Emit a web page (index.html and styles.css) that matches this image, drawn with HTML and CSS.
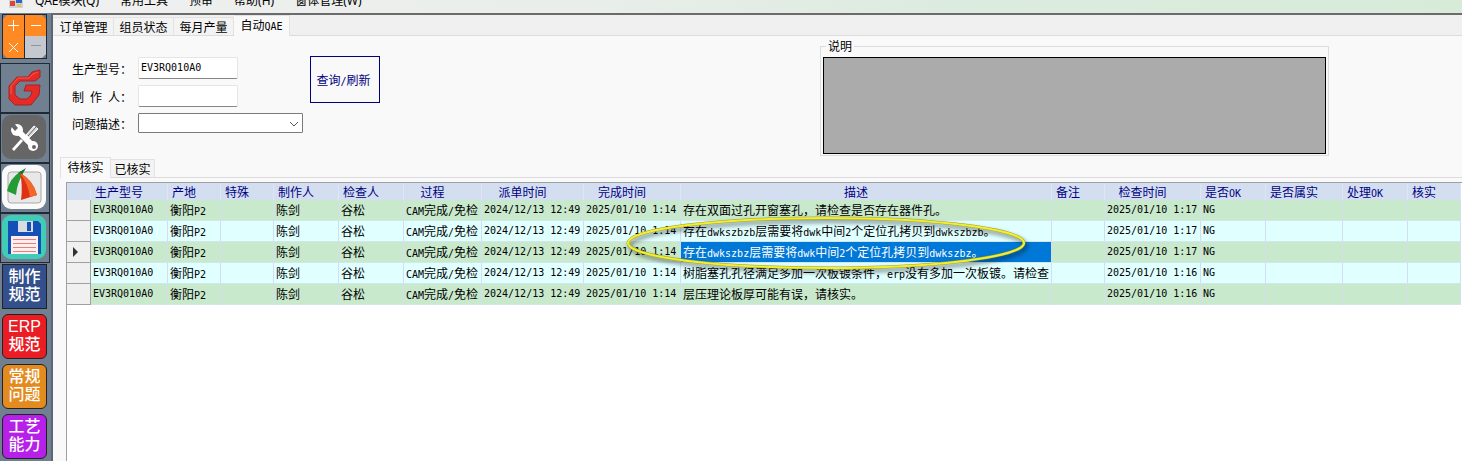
FILE: index.html
```
<!DOCTYPE html>
<html lang="zh-CN">
<head>
    <meta charset="UTF-8">
    <meta name="viewport" content="width=device-width, initial-scale=1.0">
    <title>自动QAE</title>
    <link rel="stylesheet" href="styles.css">
</head>
<body>
    <nav class="menubar">
        <svg class="app-icon" width="14" height="14" viewBox="0 0 14 14">
            <rect x="0" y="0" width="14" height="14" fill="#c9d3e0"/>
            <rect x="1" y="7" width="5" height="5" fill="#e0442c"/>
            <rect x="7" y="4" width="6" height="5" fill="#2d63c8"/>
            <rect x="8" y="10" width="4" height="3" fill="#f0c040"/>
        </svg>
        <a href="#">QAE模块(Q)</a>
        <a href="#">常用工具</a>
        <a href="#">预审</a>
        <a href="#">帮助(H)</a>
        <a href="#">窗体管理(W)</a>
    </nav>

    <div class="workspace">
        <aside class="toolbar">
            <button class="tool small" aria-label="计算器">
                <svg width="45" height="45" viewBox="0 0 45 45">
                    <rect width="45" height="45" fill="#1f2a36"/>
                    <rect x="1" y="1" width="43" height="43" fill="#708090"/>
                    <path d="M5 1H22V44H5L1 40V5Z" fill="#ff8a24"/>
                    <path d="M23 1H40L44 5V22H23Z" fill="#ff8a24"/>
                    <path d="M23 22H44V40L40 44H23Z" fill="#c5c9cf"/>
                    <path d="M22.500 1V44" stroke="#1f2a36"/>
                    <path d="M6 11.500H17M11.500 6V17M29 11.500H39M7 29L16 38M16 29L7 38" stroke="#fff" fill="none"/>
                    <path d="M29 31.500H39" stroke="#8e959e"/>
                </svg>
            </button>
            <button class="tool" aria-label="Genesis">
                <svg width="48" height="48" viewBox="0 0 48 48">
                    <path d="M39 6V13L34 17H19L14 22V31L19 35H26L30 31L31 27H23L25 21H39L38 31L30 41H14L8 35V22L16 13H27L31 8Z" fill="#e62a25" stroke="#a3252a"/>
                    <path d="M37 8L32 10L28 14H17L10 22V30" fill="none" stroke="#f4564b"/>
                </svg>
            </button>
            <button class="tool" aria-label="工具">
                <svg width="48" height="48" viewBox="0 0 48 48">
                    <rect x="1" y="1" width="44" height="44" rx="9" fill="#666"/>
                    <path d="M15 15L33 33" stroke="#fff" stroke-width="6"/>
                    <circle cx="16" cy="16" r="6" fill="#fff"/>
                    <path d="M8 10L12 8L17 14L14 17Z" fill="#666"/>
                    <circle cx="32" cy="32" r="5" fill="#fff"/>
                    <circle cx="33" cy="33" r="2" fill="#666"/>
                    <path d="M22 27L13 37L11 35L20 25Z" fill="#fff"/>
                    <path d="M25 21L33 12L37 15L28 24Z" fill="#ddd" stroke="#fff"/>
                    <path d="M27 22L35 13" stroke="#666"/>
                </svg>
            </button>
            <button class="tool" aria-label="截图">
                <svg width="48" height="48" viewBox="0 0 48 48">
                    <rect x="1" y="1" width="44" height="44" rx="9" fill="#fafafa"/>
                    <rect x="7" y="8" width="33" height="31" rx="3" fill="#e8e8e8" stroke="#a9a9a9"/>
                    <path d="M20 7Q8 15 6 27L15 31Q16 19 22 10Z" fill="#249b35"/>
                    <path d="M17 9L25 4L21 11Z" fill="#15752a"/>
                    <path d="M19 9Q22 22 20 36L36 31Q32 16 19 9Z" fill="#e03014"/>
                    <path d="M19 9Q27 20 29 33L36 31Q32 16 19 9Z" fill="#f3672a"/>
                </svg>
            </button>
            <button class="tool" aria-label="保存">
                <svg width="48" height="48" viewBox="0 0 48 48">
                    <rect x="1" y="1" width="44" height="44" rx="9" fill="#3fcdb8"/>
                    <path d="M7 7H37L40 10V40H7Z" fill="#1450b8"/>
                    <rect x="17" y="7" width="15" height="11" fill="#d9dde2"/>
                    <rect x="26" y="8" width="4" height="9" fill="#1450b8"/>
                    <rect x="10" y="22" width="27" height="18" fill="#fbeeee"/>
                    <path d="M12 25.500H35M12 29.500H35M12 33.500H35M12 37.500H35" stroke="#ea7f7a"/>
                </svg>
            </button>
            <button class="tool small"><span class="tile blue">制作<br>规范</span></button>
            <button class="tool small"><span class="tile red">ERP<br>规范</span></button>
            <button class="tool small"><span class="tile orange">常规<br>问题</span></button>
            <button class="tool small"><span class="tile purple">工艺<br>能力</span></button>
        </aside>

        <main class="client">
            <div class="tabs">
                <button class="tab">订单管理</button>
                <button class="tab">组员状态</button>
                <button class="tab">每月产量</button>
                <button class="tab active">自动<span class="en">QAE</span></button>
            </div>

            <div class="page">
                <form class="query">
                    <div class="fields">
                        <label for="model">生产型号：</label>
                        <input type="text" id="model" name="model" value="EV3RQ010A0">
                        <label for="maker"><span>制</span><span>作</span><span>人：</span></label>
                        <input type="text" id="maker" name="maker">
                        <label for="problem">问题描述：</label>
                        <div class="combo">
                            <select id="problem" name="problem"><option></option></select>
                            <svg width="10" height="6" viewBox="0 0 10 6"><path d="M1 1L5 5L9 1" fill="none" stroke="#555"/></svg>
                        </div>
                    </div>
                    <button type="button" class="search">查询<span class="en">/</span>刷新</button>
                    <fieldset class="note">
                        <legend>说明</legend>
                        <div class="note-body"></div>
                    </fieldset>
                </form>

                <div class="tabs inner">
                    <button class="tab active">待核实</button>
                    <button class="tab">已核实</button>
                </div>

                <div class="grid">
                    <table>
                        <colgroup>
                            <col class="w24"><col class="w77"><col class="w53"><col class="w53"><col class="w65"><col class="w65">
                            <col class="w78"><col class="w102"><col class="w97"><col class="w371"><col class="w53"><col class="w96">
                            <col class="w65"><col class="w77"><col class="w65"><col class="w53">
                        </colgroup>
                        <thead>
                            <tr>
                                <th></th><th>生产型号</th><th>产地</th><th>特殊</th><th>制作人</th><th>检查人</th><th>过程</th>
                                <th>派单时间</th><th>完成时间</th><th>描述</th><th>备注</th><th>检查时间</th>
                                <th>是否<span class="en">OK</span></th><th>是否属实</th><th>处理<span class="en">OK</span></th><th>核实</th>
                            </tr>
                        </thead>
                        <tbody>
                            <tr>
                                <td class="rowhead"></td><td class="en">EV3RQ010A0</td><td>衡阳<span class="en">P2</span></td><td></td><td>陈剑</td><td>谷松</td>
                                <td><span class="en">CAM</span>完成<span class="en">/</span>免检</td><td class="en">2024/12/13 12:49</td><td class="en">2025/01/10 1:14</td>
                                <td>存在双面过孔开窗塞孔，请检查是否存在器件孔。</td>
                                <td></td><td class="en">2025/01/10 1:17</td><td class="en">NG</td><td></td><td></td><td></td>
                            </tr>
                            <tr>
                                <td class="rowhead"></td><td class="en">EV3RQ010A0</td><td>衡阳<span class="en">P2</span></td><td></td><td>陈剑</td><td>谷松</td>
                                <td><span class="en">CAM</span>完成<span class="en">/</span>免检</td><td class="en">2024/12/13 12:49</td><td class="en">2025/01/10 1:14</td>
                                <td>存在<span class="en">dwkszbzb</span>层需要将<span class="en">dwk</span>中间<span class="en">2</span>个定位孔拷贝到<span class="en">dwkszbzb</span>。</td>
                                <td></td><td class="en">2025/01/10 1:17</td><td class="en">NG</td><td></td><td></td><td></td>
                            </tr>
                            <tr>
                                <td class="rowhead current"></td><td class="en">EV3RQ010A0</td><td>衡阳<span class="en">P2</span></td><td></td><td>陈剑</td><td>谷松</td>
                                <td><span class="en">CAM</span>完成<span class="en">/</span>免检</td><td class="en">2024/12/13 12:49</td><td class="en">2025/01/10 1:14</td>
                                <td class="selected">存在<span class="en">dwkszbz</span>层需要将<span class="en">dwk</span>中间<span class="en">2</span>个定位孔拷贝到<span class="en">dwkszbz</span>。</td>
                                <td></td><td class="en">2025/01/10 1:17</td><td class="en">NG</td><td></td><td></td><td></td>
                            </tr>
                            <tr>
                                <td class="rowhead"></td><td class="en">EV3RQ010A0</td><td>衡阳<span class="en">P2</span></td><td></td><td>陈剑</td><td>谷松</td>
                                <td><span class="en">CAM</span>完成<span class="en">/</span>免检</td><td class="en">2024/12/13 12:49</td><td class="en">2025/01/10 1:14</td>
                                <td>树脂塞孔孔径满足多加一次板镀条件，<span class="en">erp</span>没有多加一次板镀。请检查</td>
                                <td></td><td class="en">2025/01/10 1:16</td><td class="en">NG</td><td></td><td></td><td></td>
                            </tr>
                            <tr>
                                <td class="rowhead"></td><td class="en">EV3RQ010A0</td><td>衡阳<span class="en">P2</span></td><td></td><td>陈剑</td><td>谷松</td>
                                <td><span class="en">CAM</span>完成<span class="en">/</span>免检</td><td class="en">2024/12/13 12:49</td><td class="en">2025/01/10 1:14</td>
                                <td>层压理论板厚可能有误，请核实。</td>
                                <td></td><td class="en">2025/01/10 1:16</td><td class="en">NG</td><td></td><td></td><td></td>
                            </tr>
                        </tbody>
                    </table>
                    <svg class="mark" width="404" height="62" viewBox="0 0 404 62">
                        <ellipse cx="202" cy="29" rx="198" ry="25" fill="none" stroke="#a3a31c" stroke-width="3"/>
                        <ellipse cx="202" cy="29" rx="198" ry="25" fill="none" stroke="#f2ee35" stroke-width="2"/>
                    </svg>
                </div>
            </div>
        </main>
    </div>
</body>
</html>
```
FILE: styles.css
```
* {
    box-sizing: border-box;
}
body {
    margin: 0;
    height: 100vh;
    display: flex;
    flex-direction: column;
    overflow: hidden;
    font-family: "Noto Sans CJK SC", sans-serif;
    font-size: 12px;
    line-height: 16px;
    color: #000;
    background: #f0f0f0;
}
button, input, select {
    font: inherit;
    color: inherit;
}
/* half-width latin, 6px per character */
.en {
    font-family: "DejaVu Sans Mono", monospace;
    font-size: 10px;
    line-height: 10px;
}

/* menu */
.menubar {
    flex: none;
    display: flex;
    align-items: center;
    gap: 21px;
    height: 24px;
    margin-top: -11px;
    padding-left: 9px;
    background: linear-gradient(90deg, #f0f0f0 0%, #e9eeea 40%, #dcebdf 65%, #d8ebd9 100%);
    font-family: "Noto Sans", "Noto Sans CJK SC", sans-serif;
}
.menubar a {
    color: #000;
    text-decoration: none;
}
.app-icon {
    margin-right: -9px;
}
.workspace {
    flex: 1;
    display: flex;
    min-height: 0;
}

/* left toolbar */
.toolbar {
    flex: none;
    width: 51px;
    background: #708090;
}
.tool {
    display: block;
    width: 50px;
    height: 50px;
    padding: 0;
    border: 1px solid #1f2a36;
    background: #708090;
    overflow: hidden;
}
.tool svg {
    display: block;
}
.tool.small {
    padding: 1px 3px 4px 2px;
    border: none;
}
.tile {
    display: block;
    width: 45px;
    height: 45px;
    padding-top: 3px;
    border: 1px solid #222;
    border-radius: 6px;
    color: #fff;
    font-family: "Liberation Sans", "Noto Sans CJK SC", sans-serif;
    font-size: 16px;
    font-weight: 500;
    line-height: 18px;
    text-align: center;
}
.blue {
    background: #33508c;
    border-radius: 0;
}
.red {
    background: #ea1c24;
}
.orange {
    background: #e38b1e;
}
.purple {
    background: #b620e8;
}

/* client area */
.client {
    flex: 1;
    min-width: 0;
    display: flex;
    flex-direction: column;
    border-top: 2px solid #6b6b6b;
    border-left: 2px solid #5d666f;
}
.tabs {
    flex: none;
    display: flex;
    align-items: flex-end;
    height: 21px;
    padding-left: 1px;
    border-bottom: 1px solid #dcdcdc;
}
.tab {
    height: 18px;
    width: 60px;
    padding: 0;
    border: 1px solid #e2e2e2;
    border-left-width: 0;
    border-bottom: none;
    background: #f3f3f3;
    line-height: 16px;
}
.tab.active {
    height: 21px;
    width: 56px;
    margin-bottom: -1px;
    padding-bottom: 2px;
    background: #f9f9f9;
}
.page {
    flex: 1;
    display: flex;
    flex-direction: column;
    min-height: 0;
    padding-left: 7px;
    background: #f9f9f9;
}
.query {
    display: flex;
    align-items: flex-start;
    height: 121px;
    padding-left: 12px;
}
.fields {
    display: grid;
    grid-template-columns: 66px 165px;
    row-gap: 6px;
    align-items: center;
    padding-top: 21px;
}
.fields label {
    display: flex;
    gap: 6px;
    padding-top: 2px;
}
.fields input {
    width: 100px;
    height: 22px;
    padding: 0 2px 2px;
    border: 1px solid #e5e5e5;
    border-bottom-color: #868686;
    border-radius: 2px;
    background: #fff;
    font-family: "DejaVu Sans Mono", monospace;
    font-size: 10px;
}
.combo {
    position: relative;
}
.combo select {
    display: block;
    width: 165px;
    height: 20px;
    appearance: none;
    border: 1px solid #7a7a7a;
    border-radius: 1px;
    background: #fff;
}
.combo svg {
    position: absolute;
    right: 4px;
    top: 8px;
    pointer-events: none;
}
.search {
    width: 70px;
    height: 47px;
    margin: 20px 0 0 7px;
    padding: 0 3px 0 0;
    border: 1px solid #000080;
    background: #f9f9f9;
    color: #000080;
}
.note {
    width: 509px;
    height: 118px;
    margin: 2px 0 0 440px;
    padding: 3px 2px 1px;
    border: 1px solid #dcdcdc;
}
.note legend {
    margin-left: 3px;
    padding: 0 2px;
}
.note-body {
    height: 97px;
    border: 1px solid #000;
    background: #ababab;
}
.inner {
    padding-left: 0;
}
.inner .tab {
    width: 44px;
}
.inner .tab.active {
    width: 51px;
    border-left-width: 1px;
}

/* data grid */
.grid {
    position: relative;
    flex: 1;
    min-height: 0;
    margin: 4px 0 0 6px;
    border-top: 1px solid #a0a0a0;
    border-left: 1px solid #a0a0a0;
    background: #fff;
    overflow: hidden;
}
table {
    table-layout: fixed;
    width: 1394px;
    border-collapse: separate;
    border-spacing: 0;
}
.w24 { width: 24px; }
.w53 { width: 53px; }
.w65 { width: 65px; }
.w77 { width: 77px; }
.w78 { width: 78px; }
.w96 { width: 96px; }
.w97 { width: 97px; }
.w102 { width: 102px; }
.w371 { width: 371px; }
th {
    height: 17px;
    padding: 0 20px 0 0;
    border-right: 1px solid #dde6f2;
    background: #d3def0;
    color: #000080;
    font-weight: normal;
    white-space: nowrap;
}
td {
    height: 21px;
    padding: 0 0 0 2px;
    border-right: 1px solid #d3def0;
    border-bottom: 1px solid #d3e6ea;
    background: #c9e9cd;
    white-space: nowrap;
}
tr:nth-child(even) td {
    background: #e0ffff;
}
tbody td.selected {
    background: #0078d7;
    color: #fff;
}
tbody tr td.rowhead {
    background: #f0f0f0;
    border-color: #a0a0a0;
}
.current::before {
    content: "";
    display: block;
    margin-left: 4px;
    border: 5px solid transparent;
    border-left-color: #333;
    border-right-width: 0;
}
.mark {
    position: absolute;
    left: 557px;
    top: 31px;
    filter: drop-shadow(2px 3px 2px rgba(0, 0, 0, 0.5));
    pointer-events: none;
}
```
